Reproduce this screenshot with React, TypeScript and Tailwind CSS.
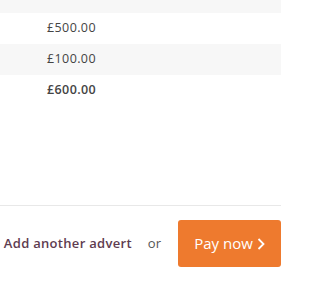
export default function App() {
  const rows = [
    { amount: "£500.00", shaded: false, bold: false },
    { amount: "£100.00", shaded: true, bold: false },
    { amount: "£600.00", shaded: false, bold: true },
  ];

  return (
    <main className="w-[288px] h-[288px] bg-white overflow-hidden font-['Open_Sans',sans-serif]">
      <div className="w-[281px]">
        {/* totals table */}
        <div className="h-[13px] bg-[#f7f7f7]" />
        {rows.map((r) => (
          <div
            key={r.amount}
            className={`h-[31px] flex items-center pl-[47px] text-[12.5px] tracking-[0.4px] text-[#444] ${r.shaded ? "bg-[#f7f7f7]" : "bg-white"} ${r.bold ? "font-semibold" : "font-medium"}`}
          >
            {r.amount}
          </div>
        ))}

        <div className="h-[99px]" />
        <div className="h-px bg-[#e8e8e8]" />

        {/* actions */}
        <div className="flex items-center justify-end pt-[14px]">
          <a className="text-[13px] tracking-[0.3px] font-semibold text-[#5e3c50] mr-[16px]">Add another advert</a>
          <span className="text-[13px] text-[#555] mr-[17px]">or</span>
          <button className="w-[103px] h-[47px] bg-[#ee7a2e] rounded-[3px] text-white text-[15px] flex items-center justify-center gap-[4px]">
            Pay now
            <svg width="8" height="12" viewBox="0 0 8 12" fill="none" stroke="white" strokeWidth="1.8">
              <path d="M1.5 1 L6.5 6 L1.5 11" />
            </svg>
          </button>
        </div>
      </div>
    </main>
  );
}
